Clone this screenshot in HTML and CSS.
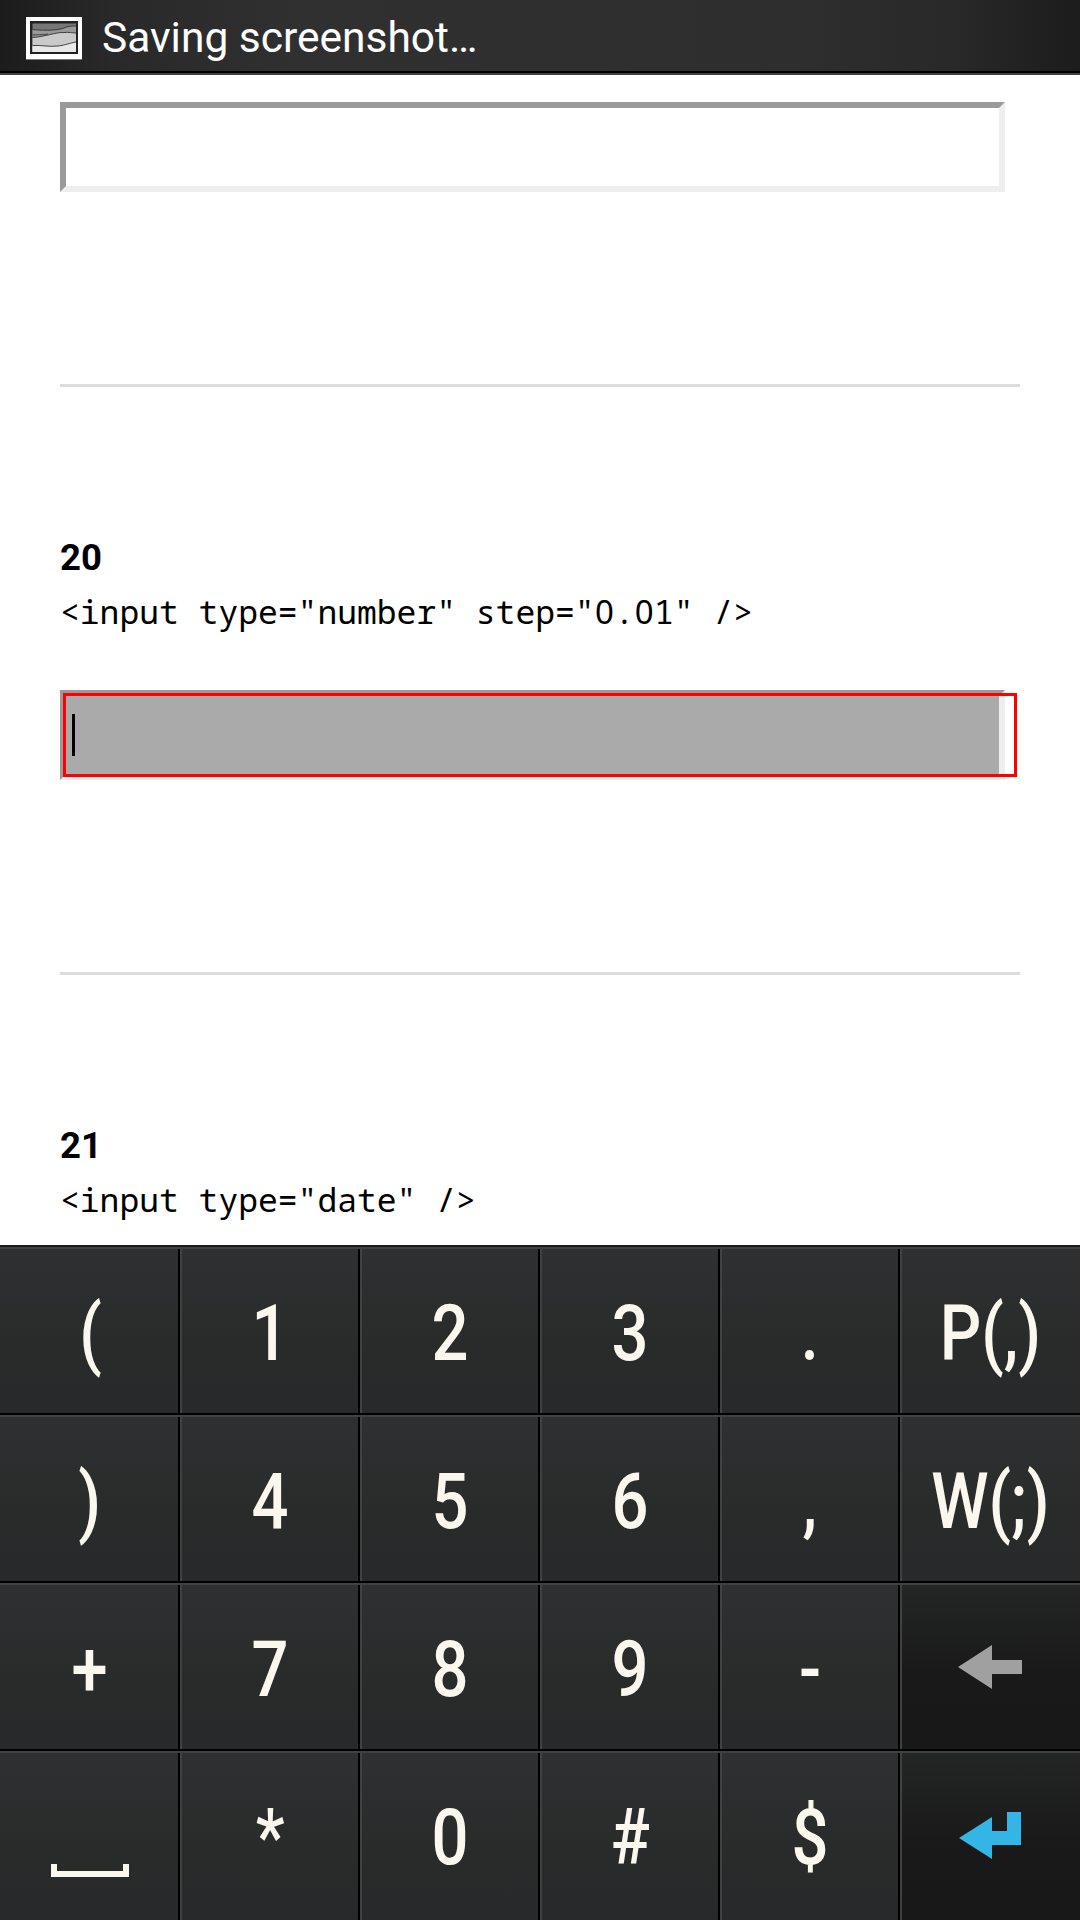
FILE: index.html
```html
<!DOCTYPE html>
<html lang="en">
<head>
<meta charset="utf-8">
<title>Input types</title>
<link rel="stylesheet" href="styles.css">
</head>
<body>
<header class="status">
  <svg class="status-icon" width="56" height="43" viewBox="0 0 56 43">
    <rect width="56" height="43" fill="#777"/>
    <rect width="56" height="42" fill="#fff"/>
    <rect x="4" y="4" width="48" height="33" fill="#222"/>
    <rect x="6.500" y="6.500" width="43.500" height="28.500" fill="#777"/>
    <path d="M6.500 12.500C20 14 34 13 38 11C42 9 46 9 50 9V20H6.500Z" fill="#999"/>
    <path d="M6.500 20.500C18 20 30 15 38 15.500C43 15 46 16 50 16V35H6.500Z" fill="#cacaca"/>
    <path d="M6.500 28.500C16 28 22 30 32 29C40 28 44 26 50 25V35H6.500Z" fill="#e8e8e8"/>
    <path d="M6.500 12.500C20 14 34 13 38 11C42 9 46 9 50 9M6.500 18C14 17.500 18 18 22 17M6.500 20.500C18 20 30 15 38 15.500C43 15 46 16 50 16M6.500 28.500C16 28 22 30 32 29C40 28 44 26 50 25" fill="none" stroke="#333" stroke-width="0.900"/>
  </svg>
  <span class="status-text">Saving screenshot…</span>
</header>
<main class="page">
  <section class="entry entry-first">
    <div class="field"></div>
  </section>
  <section class="entry">
    <h2 class="number">20</h2>
    <code class="code">&lt;input type="number" step="<span class="zero">0</span>.<span class="zero">0</span>1" /&gt;</code>
    <div class="field field-active"><i class="caret"></i><i class="focus-ring"></i></div>
  </section>
  <section class="entry">
    <h2 class="number">21</h2>
    <code class="code">&lt;input type="date" /&gt;</code>
  </section>
</main>
<div class="keyboard">
  <div class="row">
    <div class="key"><span>(</span></div><div class="key"><span>1</span></div><div class="key"><span>2</span></div><div class="key"><span>3</span></div><div class="key"><span>.</span></div><div class="key"><span>P(,)</span></div>
  </div>
  <div class="row">
    <div class="key"><span>)</span></div><div class="key"><span>4</span></div><div class="key"><span>5</span></div><div class="key"><span>6</span></div><div class="key"><span>,</span></div><div class="key"><span>W(;)</span></div>
  </div>
  <div class="row">
    <div class="key"><span>+</span></div><div class="key"><span>7</span></div><div class="key"><span>8</span></div><div class="key"><span>9</span></div><div class="key"><span>-</span></div>
    <div class="key key-dark"><svg class="icon" width="64" height="44" viewBox="0 0 64 44"><path d="M0 22L34 0V15H64V29H34V44Z" fill="#a0a0a0"/></svg></div>
  </div>
  <div class="row">
    <div class="key key-space"><svg class="icon" width="78" height="13" viewBox="0 0 78 13"><path d="M0 0H6V7H72V0H78V13H0Z" fill="#faf7ee"/></svg></div>
    <div class="key"><span>*</span></div><div class="key"><span>0</span></div><div class="key"><span>#</span></div><div class="key"><span>$</span></div>
    <div class="key key-dark key-enter"><svg class="icon" width="62" height="47" viewBox="0 0 62 47"><path d="M0 26L33 5V19H48V0H62V33H33V47Z" fill="#33b5e5"/></svg></div>
  </div>
</div>
</body>
</html>
```
FILE: styles.css
```css
* { box-sizing: border-box; }

body {
  margin: 0;
  width: 1080px;
  height: 1920px;
  display: flex;
  flex-direction: column;
  overflow: hidden;
  background: #fff;
  color: #000;
  font-family: Roboto, sans-serif;
}

.status {
  height: 75px;
  flex: none;
  display: flex;
  align-items: flex-start;
  gap: 20px;
  padding: 17px 0 0 26px;
  background:
    linear-gradient(#000 2px, #404040 2px) 0 71px / 100% 4px no-repeat,
    linear-gradient(90deg, #1c1c1c, #292929 110px, #303030 300px, #2e2e2e 800px, #292929 950px, #1c1c1c);
}

.status-icon { flex: none; }

.status-text {
  color: #fff;
  font-size: 43px;
  line-height: 50px;
  margin-top: -5px;
  white-space: nowrap;
  transform: scaleX(0.988);
  transform-origin: left;
}

.page {
  flex: 1;
  min-height: 0;
  overflow: hidden;
  padding: 27px 60px 0;
}

.entry {
  height: 588px;
  padding-top: 149px;
}

.entry-first {
  height: 285px;
  padding-top: 0;
}

.entry:not(:last-child) { border-bottom: 3px solid #ddd; }

.number {
  margin: 0;
  font-size: 36.500px;
  line-height: 44px;
  font-weight: 700;
}

.code {
  display: block;
  height: 60px;
  margin-top: 10px;
  font-family: "Droid Sans Mono", "Noto Sans Mono", "DejaVu Sans Mono", monospace;
  font-size: 33px;
  line-height: 44px;
  white-space: pre;
}

.zero {
  display: inline-block;
  width: 19.800px;
  text-align: center;
  font-family: "Noto Sans", sans-serif;
  line-height: 1;
}

.field {
  position: relative;
  width: 945px;
  height: 90px;
  border: 6px solid;
  border-color: #9a9a9a #eee #eee #9a9a9a;
}

.field-active {
  margin-top: 40px;
  background: #aaa;
}

.caret {
  display: block;
  width: 3px;
  height: 42px;
  margin: 18px 0 0 6px;
  background: #000;
}

.focus-ring {
  position: absolute;
  left: -3px;
  top: -3px;
  width: 954px;
  height: 84px;
  border: 3px solid #f00;
}

.keyboard {
  height: 675px;
  flex: none;
  padding-top: 2px;
  background: #1c1c1c;
}

.row {
  display: grid;
  grid-template-columns: repeat(6, 180px);
  height: 168px;
  border-top: 2px solid #404140;
  border-bottom: 2px solid #000;
}

.row:last-child {
  height: 169px;
  border-bottom: 0;
}

.key {
  display: flex;
  justify-content: center;
  align-items: flex-start;
  border-left: 2px solid #404140;
  border-right: 2px solid #000;
  background: linear-gradient(#2e3031, #292b2b 60%, #27292a);
  color: #faf7ee;
  font-size: 77.500px;
  font-weight: 500;
  line-height: 92px;
}

.key:first-child {
  border-left: 0;
  padding-left: 2px;
}

.key:last-child {
  border-right: 0;
  padding-right: 2px;
}

.key span {
  margin-top: 39px;
  transform: scaleX(0.840);
}

.key-dark {
  background: linear-gradient(#242525, #191919 55%, #181818);
}

.icon { flex: none; }

.key-dark .icon { margin-top: 60px; }
.key-enter .icon { margin-top: 59px; }
.key-space .icon { margin-top: 111px; }
```
